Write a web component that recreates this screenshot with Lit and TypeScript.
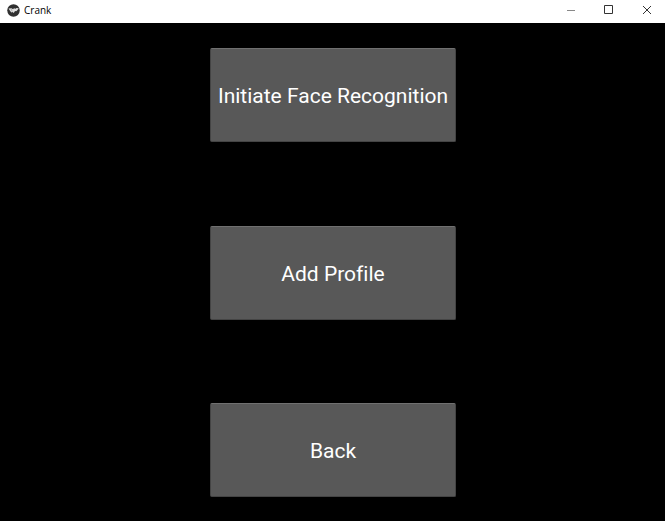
import { LitElement, html, css } from "lit";
import { customElement, property } from "lit/decorators.js";

@customElement("title-bar")
class TitleBar extends LitElement {
  @property() name = "";

  static styles = css`
    :host {
      display: flex;
      align-items: stretch;
      height: 23px;
      flex: none;
      background: #fff;
      color: #000;
      font-family: "Open Sans", "Noto Sans", sans-serif;
    }
    .brand {
      display: flex;
      align-items: center;
      gap: 4px;
      flex: 1;
      padding: 0 0 3px 7px;
    }
    .logo {
      display: block;
      width: 13px;
      height: 13px;
    }
    .name {
      margin: 0;
      font-size: 10px;
      line-height: 16px;
      font-weight: 400;
    }
    .control {
      display: flex;
      align-items: center;
      justify-content: center;
      width: 38px;
      padding: 0 0 3px 2px;
      border: 0;
      background: transparent;
      color: #333;
    }
    .control svg {
      display: block;
      width: 10px;
      height: 10px;
      fill: none;
      stroke: currentColor;
    }
    .control:hover {
      background: #e5e5e5;
    }
  `;

  render() {
    return html`
      <div class="brand">
        <svg class="logo" viewBox="0 0 26 26" aria-hidden="true">
          <circle cx="13" cy="13" r="12.5" fill="#303030" />
          <path
            d="M3 9 L9 8.5 L12 10.5 L14 8.5 L17 9.5 L19 8 L23.5 8.5 L21 12 L18.5 14.5 L16 14 L13.5 18 L11 16 L8.5 17 L6 13.5 Z"
            fill="#e0e0e0"
          />
          <path d="M8 9.5 L10.5 15" stroke="#777" fill="none" />
        </svg>
        <h1 class="name">${this.name}</h1>
      </div>
      <button class="control" aria-label="Minimize">
        <svg viewBox="0 0 10 10"><path d="M1 5.5H9" stroke="#888" /></svg>
      </button>
      <button class="control" aria-label="Maximize">
        <svg viewBox="0 0 10 10"><path d="M0.5 0.5H8.5V8.5H0.5Z" /></svg>
      </button>
      <button class="control" aria-label="Close">
        <svg viewBox="0 0 10 10"><path d="M1 1L9 9M9 1L1 9" /></svg>
      </button>
    `;
  }
}

@customElement("app-root")
class AppRoot extends LitElement {
  static styles = css`
    :host {
      display: flex;
      flex-direction: column;
      min-height: 100vh;
      background: #000;
    }
    .menu {
      flex: 1;
      display: grid;
      grid-template-columns: minmax(245px, 37%);
      justify-content: center;
      align-content: space-between;
      gap: 24px;
      padding: 25px 0 24px 1px;
    }
    .action {
      box-sizing: border-box;
      min-height: 94px;
      padding: 7px 6px 5px;
      border: 1px solid #444;
      border-top-color: #707070;
      border-radius: 2px;
      background: #585858;
      color: #fff;
      font: 400 21px/24px Roboto, sans-serif;
      font-variant-ligatures: none;
      white-space: nowrap;
    }
    .action:active {
      background: #32a4ce;
    }
  `;

  private actions = ["Initiate Face Recognition", "Add Profile", "Back"];

  render() {
    return html`
      <title-bar name="Crank"></title-bar>
      <main class="menu">
        ${this.actions.map(
          (label) => html`<button class="action">${label}</button>`
        )}
      </main>
    `;
  }
}
